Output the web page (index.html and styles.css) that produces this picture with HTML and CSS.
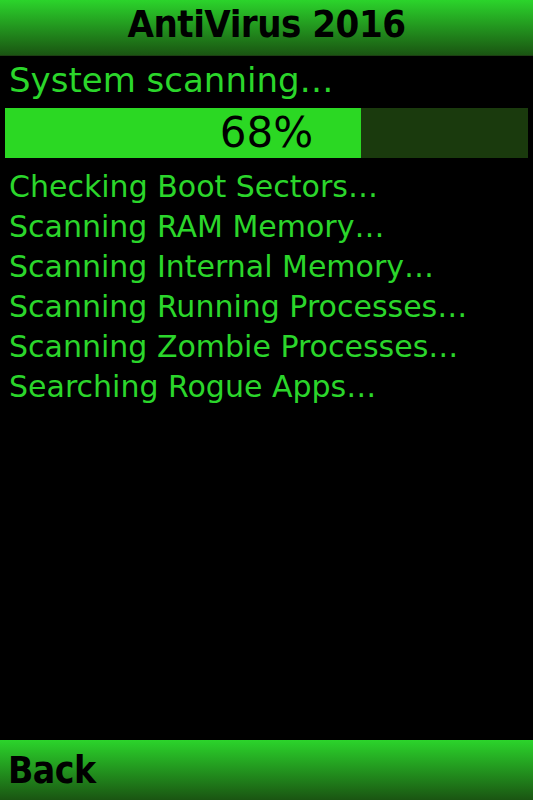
FILE: index.html
```html
<!DOCTYPE html>
<html>
<head>
<meta charset="utf-8">
<link rel="stylesheet" href="styles.css">
</head>
<body>
<div class="screen">
  <header class="titlebar">AntiVirus 2016</header>
  <main class="content">
    <div class="status">System scanning…</div>
    <div class="progress">
      <div class="progress-fill" style="width: 68%"></div>
      <div class="progress-label">68%</div>
    </div>
    <ul class="tasks">
      <li>Checking Boot Sectors…</li>
      <li>Scanning RAM Memory…</li>
      <li>Scanning Internal Memory…</li>
      <li>Scanning Running Processes…</li>
      <li>Scanning Zombie Processes…</li>
      <li>Searching Rogue Apps…</li>
    </ul>
  </main>
  <footer class="softkeys"><span class="softkey">Back</span></footer>
</div>
</body>
</html>
```

FILE: styles.css
```css
html, body {
  margin: 0;
  padding: 0;
  background: #000;
}
.screen {
  width: 533px;
  height: 800px;
  display: flex;
  flex-direction: column;
  background: #000;
  font-family: "DejaVu Sans", sans-serif;
  overflow: hidden;
}
.titlebar {
  height: 56px;
  box-sizing: border-box;
  border-bottom: 1px solid #1c3f12;
  background: linear-gradient(#2bd42b, #1a5512);
  color: #000;
  font-family: "DejaVu Sans Condensed", "DejaVu Sans", sans-serif;
  font-weight: bold;
  font-size: 38px;
  line-height: 48px;
  text-align: center;
  letter-spacing: -0.5px;
}
.content {
  flex: 1;
  display: flex;
  flex-direction: column;
}
.status {
  margin-top: 2px;
  padding-left: 9px;
  color: #2bd62b;
  font-size: 34px;
  line-height: 44px;
  white-space: nowrap;
}
.progress {
  position: relative;
  margin: 6px 5px 0 5px;
  height: 50px;
  background: #1a3a0d;
}
.progress-fill {
  height: 100%;
  background: #2bd823;
}
.progress-label {
  position: absolute;
  inset: 0;
  text-align: center;
  color: #000;
  font-size: 42px;
  line-height: 50px;
}
.tasks {
  list-style: none;
  margin: 9px 0 0 0;
  padding: 0 0 0 9px;
  color: #2bd62b;
  font-size: 30px;
  line-height: 40px;
  white-space: nowrap;
}
.softkeys {
  height: 60px;
  background: linear-gradient(#2bd42b, #1a5512);
  display: flex;
  align-items: flex-start;
  padding-left: 8px;
}
.softkey {
  color: #000;
  font-family: "DejaVu Sans Condensed", "DejaVu Sans", sans-serif;
  font-weight: bold;
  font-size: 37px;
  line-height: 62px;
  letter-spacing: -0.5px;
}
```
